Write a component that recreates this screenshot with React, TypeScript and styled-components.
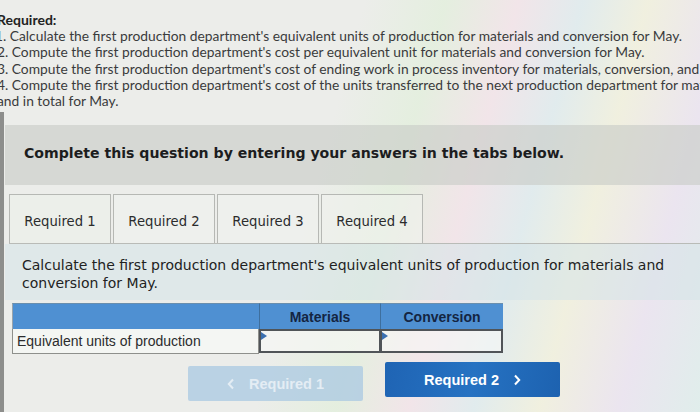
import styled, { createGlobalStyle } from 'styled-components';

const GlobalStyle = createGlobalStyle`
  html, body {
    margin: 0;
    padding: 0;
  }
  body {
    width: 700px;
    height: 412px;
    overflow: hidden;
    background: #ecedea;
  }
`;

const Page = styled.div`
  width: 700px;
  height: 412px;
  overflow: hidden;
  background:
    linear-gradient(105deg,
      rgba(236, 238, 234, 0) 0%,
      rgba(236, 238, 234, 0) 45%,
      rgba(222, 240, 214, 0.55) 55%,
      rgba(246, 222, 232, 0.55) 64%,
      rgba(216, 234, 240, 0.55) 72%,
      rgba(244, 242, 214, 0.55) 80%,
      rgba(234, 222, 244, 0.55) 90%,
      rgba(214, 238, 236, 0.55) 100%),
    #ecedea;
`;

const Instructions = styled.div`
  padding: 12px 0 0;
  margin-left: -3px;
  font-family: Lato, "Open Sans", sans-serif;
  font-size: 13.8px;
  line-height: 16.2px;
  color: #3a3b3c;
  height: 112px;
  box-sizing: border-box;
`;

const InstrTitle = styled.div`
  font-weight: 700;
  color: #222;
  font-size: 14px;
`;

const InstrLine = styled.div<{ $indent?: number }>`
  white-space: nowrap;
  overflow: hidden;
  margin-left: ${(p) => p.$indent ?? 0}px;
`;

const Question = styled.div`
  border-left: 4px solid #8d8e8c;
  padding-top: 13px;
  height: 300px;
  box-sizing: border-box;
`;

const Banner = styled.div`
  margin-left: 1px;
  height: 60px;
  display: flex;
  align-items: center;
  padding-left: 19px;
  padding-bottom: 4px;
  box-sizing: border-box;
  background: rgba(200, 204, 198, 0.62);
  font-family: "DejaVu Sans", Verdana, sans-serif;
  font-weight: 700;
  font-size: 14.1px;
  color: #1c1d1e;
`;

const TabRow = styled.div`
  display: flex;
  margin: 9px 0 0 5px;
  border-bottom: 1px solid #b9bbb7;
`;

const Tab = styled.div<{ $active?: boolean }>`
  width: 102px;
  height: 49px;
  box-sizing: border-box;
  margin-right: 2px;
  padding-top: 4px;
  border: 1px solid #b6b8b4;
  border-bottom: none;
  display: flex;
  align-items: center;
  justify-content: center;
  font-family: "DejaVu Sans", Verdana, sans-serif;
  font-size: 13.2px;
  color: #2a2b2c;
  background: ${(p) => (p.$active ? 'rgba(236, 238, 234, 0.9)' : 'rgba(240, 242, 238, 0.55)')};
  margin-bottom: ${(p) => (p.$active ? '-1px' : '0')};
`;

const Prompt = styled.div`
  margin-left: 1px;
  padding: 12px 17px 8px;
  background: rgba(214, 228, 232, 0.55);
  font-family: "DejaVu Sans", Verdana, sans-serif;
  font-size: 14px;
  line-height: 18px;
  color: #222;
`;

const Grid = styled.div`
  margin: 3px 0 0 8px;
  display: grid;
  grid-template-columns: 247px 121px 123px;
  width: 491px;
  font-family: "Liberation Sans", Arial, sans-serif;
`;

const HeadCell = styled.div`
  height: 25px;
  background: #4f90d2;
  border-left: 1px solid #3e6f9e;
  border-top: 1px solid #6b8fae;
  display: flex;
  align-items: center;
  justify-content: center;
  font-weight: 700;
  font-size: 14px;
  color: #142542;
  &:first-child {
    border-left: 1px solid #9aa4ac;
  }
  &:last-of-type {
    border-right: 1px solid #3e6f9e;
  }
`;

const LabelCell = styled.div`
  height: 24px;
  border: 1px solid #8e908c;
  border-top: none;
  background: rgba(246, 247, 245, 0.85);
  display: flex;
  align-items: center;
  padding-left: 4px;
  font-size: 14px;
  color: #2b2c2d;
`;

const InputCell = styled.div`
  position: relative;
  height: 24px;
  box-sizing: border-box;
  border: 2px solid #505458;
  border-right-width: 1px;
  background: rgba(248, 249, 247, 0.6);
  &:last-child {
    border-right-width: 2px;
  }
  &::before {
    content: '';
    position: absolute;
    left: 0;
    top: 1px;
    border-left: 6px solid #3a6fb0;
    border-top: 4px solid transparent;
    border-bottom: 4px solid transparent;
  }
`;

const NavRow = styled.div`
  display: flex;
  align-items: flex-start;
  gap: 22px;
  margin: 8px 0 0 184px;
`;

const NavButton = styled.div<{ $disabled?: boolean }>`
  width: 175px;
  height: 35px;
  border-radius: 2px;
  display: flex;
  align-items: center;
  justify-content: center;
  gap: 14px;
  font-family: "Liberation Sans", Arial, sans-serif;
  font-weight: 700;
  font-size: 14.5px;
  color: ${(p) => (p.$disabled ? '#e4edf4' : '#ffffff')};
  background: ${(p) =>
    p.$disabled
      ? 'rgba(170, 200, 226, 0.75)'
      : 'linear-gradient(100deg, #1f64b4 0%, #2672c2 50%, #1d62b0 100%)'};
  margin-top: ${(p) => (p.$disabled ? '4px' : '0')};
`;

const Chevron = styled.svg`
  width: 8px;
  height: 12px;
`;

const ChevronIcon = ({ dir }: { dir: 'left' | 'right' }) => (
  <Chevron viewBox="0 0 8 12">
    <path
      d={dir === 'left' ? 'M6 1.5 L1.8 6 L6 10.5' : 'M2 1.5 L6.2 6 L2 10.5'}
      fill="none"
      stroke="currentColor"
      strokeWidth={2}
    />
  </Chevron>
);

const instructions = [
  "1. Calculate the first production department's equivalent units of production for materials and conversion for May.",
  "2. Compute the first production department's cost per equivalent unit for materials and conversion for May.",
  "3. Compute the first production department's cost of ending work in process inventory for materials, conversion, and in total for May.",
  "4. Compute the first production department's cost of the units transferred to the next production department for materials, conversion,",
  'and in total for May.',
];

export default function App() {
  return (
    <Page>
      <GlobalStyle />
      <Instructions>
        <InstrTitle>Required:</InstrTitle>
        {instructions.map((text, i) => (
          <InstrLine key={i} $indent={i === 0 ? -2 : 0}>
            {text}
          </InstrLine>
        ))}
      </Instructions>
      <Question>
        <Banner>Complete this question by entering your answers in the tabs below.</Banner>
        <TabRow>
          <Tab $active>Required 1</Tab>
          <Tab>Required 2</Tab>
          <Tab>Required 3</Tab>
          <Tab>Required 4</Tab>
        </TabRow>
        <Prompt>
          Calculate the first production department's equivalent units of production for materials and
          conversion for May.
        </Prompt>
        <Grid>
          <HeadCell />
          <HeadCell>Materials</HeadCell>
          <HeadCell>Conversion</HeadCell>
          <LabelCell>Equivalent units of production</LabelCell>
          <InputCell />
          <InputCell />
        </Grid>
        <NavRow>
          <NavButton $disabled>
            <ChevronIcon dir="left" />
            Required 1
          </NavButton>
          <NavButton>
            Required 2
            <ChevronIcon dir="right" />
          </NavButton>
        </NavRow>
      </Question>
    </Page>
  );
}
